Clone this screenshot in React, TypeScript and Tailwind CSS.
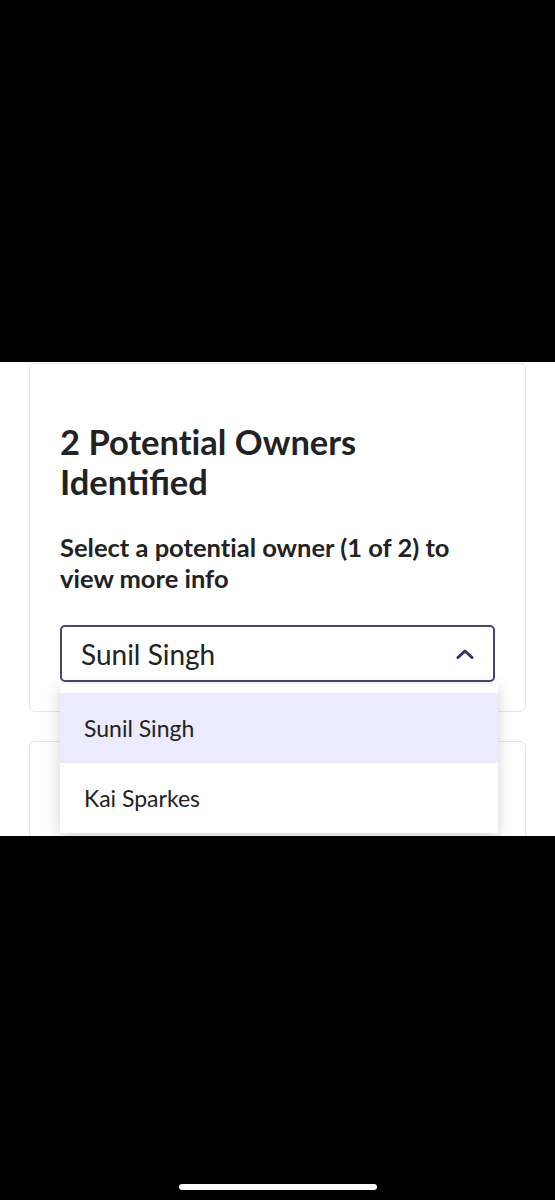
import React from 'react';

const font = { fontFamily: 'Lato, "Open Sans", sans-serif' };

const owners = ['Sunil Singh', 'Kai Sparkes'];

// Lato draws "ti" as a ligature; the reference doesn't
const NoLiga = ({ children }: { children: React.ReactNode }) => (
  <span className="[font-variant-ligatures:none] [font-feature-settings:'liga'_0,'clig'_0,'dlig'_0,'calt'_0]">
    {children}
  </span>
);

const ChevronUp = () => (
  <svg width="18" height="10" viewBox="0 0 18 10" fill="none">
    <path d="M2 8.5L9 2l7 6.5" stroke="#3b3163" strokeWidth="3" strokeLinecap="round" strokeLinejoin="round" />
  </svg>
);

export default function App() {
  return (
    <div className="w-[555px] h-[1200px] bg-black flex flex-col" style={font}>
      {/* status area */}
      <div className="h-[362px] shrink-0" />

      {/* page */}
      <div className="h-[474px] shrink-0 bg-white overflow-hidden px-[29px] pt-[1px]">
        <div className="border border-[#e6e6e6] rounded-md pt-[58px] px-[30px] pb-[29px]">
          <h2 className="text-[34.5px] leading-[40px] font-bold text-[#222222]">
            2 <NoLiga>Potential</NoLiga> Owners
            <br />
            Identified
          </h2>
          <p className="mt-[30px] text-[25.5px] leading-[31px] font-bold text-[#222222]">
            Select a <NoLiga>potential</NoLiga> owner (1 of 2) to
            <br />
            view more info
          </p>

          <div className="relative mt-[31px]">
            <div className="h-[57px] border-2 border-[#4b4278] rounded-[5px] flex items-center justify-between pl-[19px] pr-[19px]">
              <span className="text-[28px] text-[#222222]">Sunil Singh</span>
              <ChevronUp />
            </div>

            {/* dropdown menu */}
            <div className="absolute left-0 top-[59px] w-[438px] bg-white pt-[9px] shadow-[0_4px_14px_rgba(0,0,0,0.18)] z-10">
              {owners.map((name, i) => (
                <div
                  key={name}
                  className={`h-[70px] flex items-center pl-[24px] text-[23px] text-[#222222] ${
                    i === 0 ? 'bg-[#ecebfd]' : 'bg-white'
                  }`}
                >
                  {name}
                </div>
              ))}
            </div>
          </div>
        </div>

        <div className="mt-[29px] h-[200px] border border-[#e6e6e6] rounded-md" />
      </div>

      {/* home indicator */}
      <div className="flex-1 flex items-end justify-center pb-[10px]">
        <div className="w-[198px] h-[6px] rounded-full bg-white" />
      </div>
    </div>
  );
}
